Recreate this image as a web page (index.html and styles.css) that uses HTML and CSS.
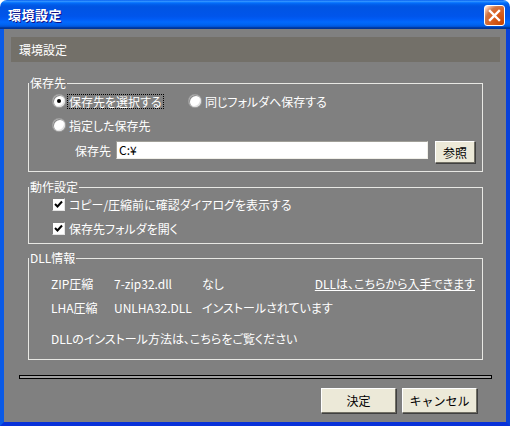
FILE: index.html
```html
<!DOCTYPE html>
<html lang="ja">
<head>
    <meta charset="UTF-8">
    <title>環境設定</title>
    <link rel="stylesheet" href="styles.css">
</head>
<body>

    <div class="window">
        <div class="titlebar">
            <span class="title">環境設定</span>
            <span class="close">
                <svg width="13" height="13" viewBox="0 0 13 13"><path d="M2 2 L11 11 M11 2 L2 11" stroke="#fff" stroke-width="2.4" stroke-linecap="square"/></svg>
            </span>
        </div>

        <div class="client">
            <div class="header">環境設定</div>

            <fieldset class="group">
                <legend>保存先</legend>
                <div class="group-body save-body">
                    <div class="row row-first">
                        <label class="opt opt-wide"><span class="radio checked"></span><span class="text focus">保存先を選択する</span></label>
                        <label class="opt"><span class="radio"></span><span class="text">同じフォルダへ保存する</span></label>
                    </div>
                    <div class="row row-second">
                        <label class="opt"><span class="radio"></span><span class="text">指定した保存先</span></label>
                    </div>
                    <div class="path-row">
                        <span class="path-label">保存先</span>
                        <div class="input">C:¥</div>
                        <button class="btn btn-small">参照</button>
                    </div>
                </div>
            </fieldset>

            <fieldset class="group group-action">
                <legend>動作設定</legend>
                <div class="group-body action-body">
                    <label class="opt check-row check-first">
                        <span class="check"><svg width="9" height="9" viewBox="0 0 9 9"><path d="M1 4 L3.5 6.5 L8 1.5" fill="none" stroke="#000" stroke-width="2"/></svg></span>
                        <span class="text">コピー/圧縮前に確認ダイアログを表示する</span>
                    </label>
                    <label class="opt check-row check-second">
                        <span class="check"><svg width="9" height="9" viewBox="0 0 9 9"><path d="M1 4 L3.5 6.5 L8 1.5" fill="none" stroke="#000" stroke-width="2"/></svg></span>
                        <span class="text">保存先フォルダを開く</span>
                    </label>
                </div>
            </fieldset>

            <fieldset class="group group-dll">
                <legend>DLL情報</legend>
                <div class="group-body dll-body">
                    <div class="dll-row">
                        <span class="col-kind">ZIP圧縮</span>
                        <span class="col-file">7-zip32.dll</span>
                        <span class="col-state">なし</span>
                        <a class="link" href="#">DLLは、こちらから入手できます</a>
                    </div>
                    <div class="dll-row">
                        <span class="col-kind">LHA圧縮</span>
                        <span class="col-file">UNLHA32.DLL</span>
                        <span class="col-state">インストールされています</span>
                    </div>
                    <div class="dll-note">DLLのインストール方法は、こちらをご覧ください</div>
                </div>
            </fieldset>

            <div class="separator"></div>

            <div class="actions">
                <button class="btn">決定</button>
                <button class="btn">キャンセル</button>
            </div>
        </div>
    </div>

</body>
</html>
```

FILE: styles.css
```css
body {
    margin: 0;
    background: #fff;
    font-family: "Noto Sans CJK JP", "Liberation Sans", sans-serif;
    font-size: 12px;
    font-feature-settings: "palt";
}
.window {
    width: 510px;
    height: 426px;
    display: flex;
    flex-direction: column;
}
.titlebar {
    height: 29px;
    flex: none;
    display: flex;
    align-items: center;
    justify-content: space-between;
    padding: 0 5px 0 8px;
    border-radius: 7px 7px 0 0;
    background: linear-gradient(to bottom, #0058ee 0%, #3593ff 4%, #288eff 6%, #127dff 8%, #036ffc 10%, #0262ee 14%, #0057e5 20%, #0054e3 24%, #0055eb 56%, #005bf5 66%, #026afe 76%, #0062ef 86%, #0052d6 92%, #0040ab 94%, #003092 100%);
}
.title {
    color: white;
    font-weight: bold;
    font-size: 13px;
    letter-spacing: 0.5px;
    text-shadow: 1px 1px #0f1089;
    font-feature-settings: normal;
}
.close {
    width: 19px;
    height: 19px;
    display: flex;
    align-items: center;
    justify-content: center;
    border: 1px solid white;
    border-radius: 3px;
    background: radial-gradient(circle at 90% 90%, #cc4600 0%, #dc6527 55%, #cd7546 70%, #ffccb2 90%, white 100%);
    margin-top: 1px;
}
.client {
    flex: 1;
    display: flex;
    flex-direction: column;
    background: #808080;
    border: 4px solid #0831d9;
    border-top: none;
    border-left-color: #0a5ae6;
    border-right-color: #0841d9;
    color: white;
}
.header {
    margin: 8px 6px 0 7px;
    height: 25px;
    line-height: 25px;
    padding-left: 8px;
    background: #737069;
    font-feature-settings: normal;
}
.group {
    margin: 14px 23px 0 24px;
    padding: 0;
    min-width: 0;
    border: 1px solid #e8e8e4;
}
.group legend {
    margin-left: 0;
    padding: 0 1px;
    line-height: 14px;
}
.group-action {
    margin-top: 8px;
}
.group-dll {
    margin-top: 7px;
}
.save-body {
    padding: 0 0 8px 24px;
}
.row {
    display: flex;
    align-items: center;
}
.row-first {
    height: 22px;
}
.row-second {
    height: 26px;
}
.opt {
    display: flex;
    align-items: center;
}
.opt-wide {
    width: 136px;
}
.radio {
    width: 12px;
    height: 12px;
    border-radius: 50%;
    background: white;
    box-shadow: inset 1px 1px 0 #8a8a8a, inset -1px -1px 0 #e0e0e0, 0 0 0 1px #a0a0a0;
    position: relative;
    flex: none;
}
.radio.checked::after {
    content: "";
    position: absolute;
    left: 4px;
    top: 4px;
    width: 4px;
    height: 4px;
    border-radius: 50%;
    background: black;
}
.text {
    margin-left: 2px;
    border: 1px dotted transparent;
    padding: 0 1px;
    line-height: 13px;
}
.text.focus {
    border-color: black;
}
.path-row {
    display: flex;
    align-items: flex-start;
    margin-top: 3px;
}
.path-label {
    margin-left: 22px;
    width: 41px;
    line-height: 19px;
}
.input {
    width: 306px;
    height: 16px;
    line-height: 16px;
    padding: 0 2px;
    color: black;
    background: white;
    border: 1px solid #a09f98;
    border-right-color: #f0efe8;
    border-bottom-color: #f0efe8;
}
.btn {
    width: 75px;
    height: 25px;
    padding: 0;
    font-family: inherit;
    font-size: 12px;
    color: black;
    background: #ece9d8;
    border: 1px solid #fff;
    border-right-color: #716f64;
    border-bottom-color: #716f64;
    box-shadow: 1px 1px 0 #404040;
}
.btn-small {
    width: 40px;
    height: 22px;
    margin-left: 7px;
}
.action-body {
    padding: 0 0 2px 23px;
}
.check-row {
    height: 21px;
}
.check-second {
    height: 26px;
}
.check {
    width: 11px;
    height: 11px;
    display: flex;
    align-items: center;
    justify-content: center;
    background: white;
    border: 1px solid #7f7f7f;
    border-right-color: #e4e4e4;
    border-bottom-color: #e4e4e4;
    flex: none;
}
.check-row .text {
    margin-left: 2px;
}
.dll-body {
    padding: 6px 7px 8px 22px;
}
.dll-row {
    display: flex;
    align-items: center;
    height: 24px;
}
.col-kind {
    width: 63px;
}
.col-file {
    width: 88px;
}
.link {
    margin-left: auto;
    color: white;
}
.dll-note {
    margin-top: 8px;
    line-height: 24px;
}
.separator {
    margin: 15px 14px 0 15px;
    height: 2px;
    border: 1px solid black;
    background: #a0a0a0;
}
.actions {
    margin-top: auto;
    margin-bottom: 9px;
    margin-right: 29px;
    display: flex;
    justify-content: flex-end;
    gap: 6px;
}
```
